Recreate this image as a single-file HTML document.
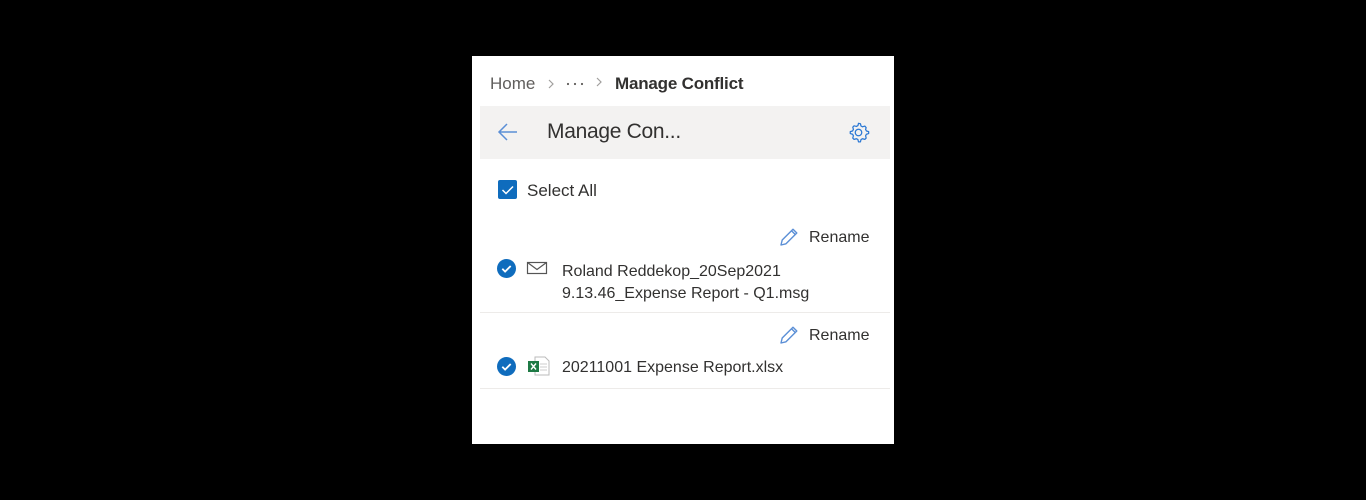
<!DOCTYPE html>
<html><head><style>
body{margin:0;width:1366px;height:500px;background:#000;font-family:"Liberation Sans",sans-serif;position:relative;overflow:hidden}
.p{position:absolute;left:472px;top:56px;width:422px;height:388px;background:#fff}
.a{position:absolute;white-space:nowrap}
</style></head><body>
<div class="p">
<div class="a" style="left:18px;top:18px;font-size:17px;color:#605e5c">Home</div>
<svg class="a" style="left:75px;top:22px" width="8" height="12"><path d="M2 2l4 4-4 4" fill="none" stroke="#a19f9d" stroke-width="1.2"/></svg>
<svg class="a" style="left:94px;top:26px" width="20" height="4"><circle cx="2" cy="2" r="1.1" fill="#605e5c"/><circle cx="9" cy="2" r="1.1" fill="#605e5c"/><circle cx="16" cy="2" r="1.1" fill="#605e5c"/></svg>
<svg class="a" style="left:123px;top:20px" width="8" height="12"><path d="M2 2l4 4-4 4" fill="none" stroke="#a19f9d" stroke-width="1.2"/></svg>
<div class="a" style="left:143px;top:18px;font-size:17px;color:#323130;font-weight:bold;letter-spacing:-0.2px">Manage Conflict</div>
<div class="a" style="left:8px;top:50px;width:410px;height:53px;background:#f3f2f1"></div>
<svg class="a" style="left:25px;top:66px" width="22" height="20"><path d="M20 10H2M10 2L2 10l8 8" fill="none" stroke="#5b8fd6" stroke-width="1.5"/></svg>
<div class="a" style="left:75px;top:64px;font-size:21px;color:#323130;letter-spacing:-0.3px">Manage Con...</div>
<svg class="a" style="left:375px;top:65px" width="23" height="23" viewBox="0 0 24 24"><path d="M12 2.5l2 .3.6 2.4 1.6.9 2.4-.8 1.4 1.6-.6 1.9.9 1.6 2.3.7v2l-2.3.7-.9 1.6.6 2.4-1.4 1.4-2.4-.7-1.6.9-.6 2.4h-2l-.6-2.4-1.6-.9-2.4.7-1.4-1.4.7-2.4-.9-1.6-2.4-.7v-2l2.4-.7.9-1.6-.7-2.4 1.4-1.4 2.4.7 1.6-.9.6-2.4z" fill="none" stroke="#2b78d4" stroke-width="1.3" stroke-linejoin="round"/><circle cx="12" cy="12" r="3.4" fill="none" stroke="#2b78d4" stroke-width="1.3"/></svg>
<div class="a" style="left:26px;top:124px;width:19px;height:19px;background:#0f6cbd;border-radius:2px"></div>
<svg class="a" style="left:26px;top:124px" width="19" height="19"><path d="M4.5 10l3.5 3.5 7-7" fill="none" stroke="#fff" stroke-width="1.5"/></svg>
<div class="a" style="left:55px;top:125px;font-size:17px;color:#323130">Select All</div>

<svg class="a" style="left:306px;top:170px" width="22" height="22"><path d="M3 19l1.2-5L15 3.2l3.8 3.8L8 17.8zM13.5 4.7l3.8 3.8" fill="none" stroke="#5b8fd6" stroke-width="1.4" stroke-linejoin="round"/></svg>
<div class="a" style="left:337px;top:173px;font-size:16px;color:#323130">Rename</div>
<svg class="a" style="left:25px;top:203px" width="19" height="19"><circle cx="9.5" cy="9.5" r="9.5" fill="#0f6cbd"/><path d="M5.3 9.8l2.8 2.8 5.6-5.6" fill="none" stroke="#fff" stroke-width="1.8"/></svg>
<svg class="a" style="left:54px;top:204px" width="22" height="16"><rect x="1.5" y="2.5" width="19" height="11" fill="none" stroke="#555" stroke-width="1.2"/><path d="M1.5 2.5l9.5 7 9.5-7" fill="none" stroke="#555" stroke-width="1.2"/></svg>
<div class="a" style="left:90px;top:205px;font-size:16px;line-height:22px;color:#323130">Roland Reddekop_20Sep2021<br>9.13.46_Expense Report - Q1.msg</div>
<div class="a" style="left:8px;top:256px;width:410px;height:1px;background:#edebe9"></div>

<svg class="a" style="left:306px;top:268px" width="22" height="22"><path d="M3 19l1.2-5L15 3.2l3.8 3.8L8 17.8zM13.5 4.7l3.8 3.8" fill="none" stroke="#5b8fd6" stroke-width="1.4" stroke-linejoin="round"/></svg>
<div class="a" style="left:337px;top:271px;font-size:16px;color:#323130">Rename</div>
<svg class="a" style="left:25px;top:301px" width="19" height="19"><circle cx="9.5" cy="9.5" r="9.5" fill="#0f6cbd"/><path d="M5.3 9.8l2.8 2.8 5.6-5.6" fill="none" stroke="#fff" stroke-width="1.8"/></svg>
<svg class="a" style="left:55px;top:299px" width="24" height="22"><path d="M8 2h10l4 4v14H8z" fill="#fff" stroke="#bbb" stroke-width="1"/><path d="M13 9h7M13 12h7M13 15h7" stroke="#ccc"/><rect x="1" y="6" width="11" height="11" fill="#1e7a45"/><path d="M4 8.5l5 6M9 8.5l-5 6" stroke="#fff" stroke-width="1.4"/></svg>
<div class="a" style="left:90px;top:303px;font-size:16px;color:#323130">20211001 Expense Report.xlsx</div>
<div class="a" style="left:8px;top:332px;width:410px;height:1px;background:#edebe9"></div>
</div>
</body></html>
